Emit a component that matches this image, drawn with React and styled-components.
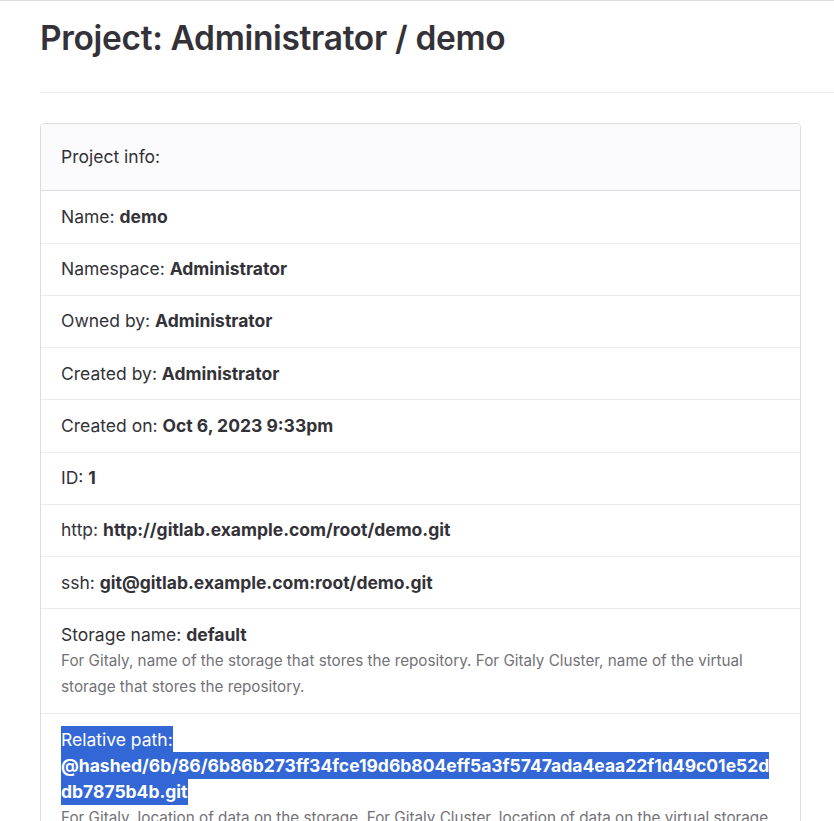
import styled, { createGlobalStyle } from "styled-components";

const GlobalStyle = createGlobalStyle`
  body {
    margin: 0;
    font-family: Inter, "Noto Sans", sans-serif;
    color: #333238;
    background: #fff;
  }
`;

const Page = styled.div`
  border-top: 1px solid #dcdcde;
  padding-left: 40px;
`;

const Title = styled.h1`
  margin: 0;
  padding: 16.5px 0 33.5px;
  font-size: 33.5px;
  line-height: 41px;
  font-weight: 600;
  letter-spacing: -0.01em;
  color: #333238;
  border-bottom: 1px solid #ececef;
`;

const Card = styled.div`
  margin: 30px 33px 0 0;
  border: 1px solid #dcdcde;
  border-radius: 4px;
  overflow: hidden;
  font-size: 17.5px;
  line-height: 26.25px;
`;

const CardHeader = styled.div`
  padding: 20px;
  background: #fbfafd;
  border-bottom: 1px solid #dcdcde;
`;

const Row = styled.div`
  padding: 12.5px 20px;
  border-bottom: 1px solid #ececef;
  &:last-child {
    border-bottom: none;
  }
`;

const Value = styled.strong`
  font-weight: 700;
`;

const Help = styled.div`
  font-size: 15.25px;
  line-height: 26.25px;
  color: #737278;
`;

const Selected = styled.span`
  background: #3367d6;
  color: #fff;
  padding: 3px 0;
  box-decoration-break: clone;
  -webkit-box-decoration-break: clone;
`;

const Path = styled.strong`
  font-weight: 700;
  overflow-wrap: anywhere;
`;

const info = [
  ["Name:", "demo"],
  ["Namespace:", "Administrator"],
  ["Owned by:", "Administrator"],
  ["Created by:", "Administrator"],
  ["Created on:", "Oct 6, 2023 9:33pm"],
  ["ID:", "1"],
  ["http:", "http://gitlab.example.com/root/demo.git"],
  ["ssh:", "git@gitlab.example.com:root/demo.git"],
];

const App = () => {
  return (
    <>
      <GlobalStyle />
      <Page>
        <Title>Project: Administrator / demo</Title>
        <Card>
          <CardHeader>Project info:</CardHeader>
          {info.map(([label, value]) => (
            <Row key={label}>
              {label} <Value>{value}</Value>
            </Row>
          ))}
          <Row>
            Storage name: <Value>default</Value>
            <Help>
              For Gitaly, name of the storage that stores the repository. For
              Gitaly Cluster, name of the virtual storage that stores the
              repository.
            </Help>
          </Row>
          <Row>
            <Selected>
              Relative path:{" "}
              <Path>
                @hashed/6b/86/6b86b273ff34fce19d6b804eff5a3f5747ada4eaa22f1d49c01e52ddb7875b4b.git
              </Path>
            </Selected>
            <Help>
              For Gitaly, location of data on the storage. For Gitaly Cluster,
              location of data on the virtual storage.
            </Help>
          </Row>
        </Card>
      </Page>
    </>
  );
};

export default App;
